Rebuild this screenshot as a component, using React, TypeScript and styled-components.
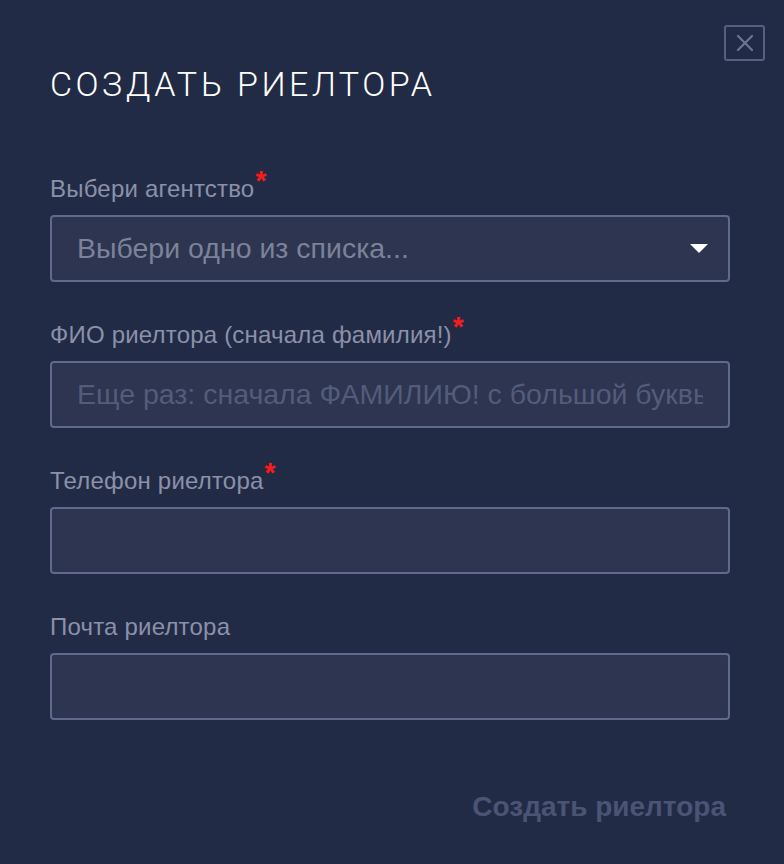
import styled, { createGlobalStyle } from "styled-components";

const GlobalStyle = createGlobalStyle`
  html, body {
    margin: 0;
    padding: 0;
    background: #222b45;
  }
  body {
    font-family: "Liberation Sans", Arial, sans-serif;
  }
`;

const Modal = styled.div`
  position: relative;
  box-sizing: border-box;
  width: 784px;
  min-height: 864px;
  padding: 64px 54px 0 50px;
  background: #222b45;
`;

const CloseButton = styled.button`
  position: absolute;
  top: 25px;
  right: 19px;
  width: 41px;
  height: 36px;
  box-sizing: border-box;
  border: 2px solid #566082;
  border-radius: 3px;
  background: transparent;
  display: flex;
  align-items: center;
  justify-content: center;
  padding: 0;
  cursor: pointer;
`;

const Title = styled.h1`
  margin: 0 0 71px;
  font-family: "Roboto", "Liberation Sans", sans-serif;
  font-weight: 300;
  font-size: 34px;
  line-height: 40px;
  letter-spacing: 3.5px;
  color: #ffffff;
`;

const Form = styled.form`
  display: flex;
  flex-direction: column;
  gap: 39px;
`;

const Field = styled.div`
  display: flex;
  flex-direction: column;
  gap: 12px;
`;

const Label = styled.label`
  font-size: 24px;
  line-height: 28px;
  letter-spacing: 0.2px;
  color: #8b91a9;
`;

const Star = styled.sup`
  color: #ff1a1a;
  font-weight: 700;
  font-size: 28px;
  line-height: 0;
  position: relative;
  top: 2px;
  margin-left: 1px;
`;

const Input = styled.input<{ $dim?: boolean }>`
  box-sizing: border-box;
  width: 100%;
  height: 67px;
  padding: 0 25px;
  background: #2d3550;
  border: 2px solid #5f6a8d;
  border-radius: 4px;
  font-family: "Liberation Sans", Arial, sans-serif;
  font-size: 28.5px;
  color: #c8cbd6;
  outline: none;

  &::placeholder {
    color: ${(p) => (p.$dim ? "#535c7a" : "#7b8299")};
  }
`;

const SelectBox = styled.div`
  box-sizing: border-box;
  height: 67px;
  padding: 0 20px 0 25px;
  background: #2d3550;
  border: 2px solid #5f6a8d;
  border-radius: 4px;
  display: flex;
  align-items: center;
  justify-content: space-between;
  font-size: 28.5px;
  color: #7b8299;
  cursor: pointer;
`;

const Footer = styled.div`
  display: flex;
  justify-content: flex-end;
  margin-top: 71px;
  padding-right: 4px;
`;

const SubmitButton = styled.button`
  background: none;
  border: none;
  padding: 0;
  font-family: "Liberation Sans", Arial, sans-serif;
  font-weight: 700;
  font-size: 28px;
  line-height: 32px;
  color: #4b5474;
  cursor: default;
`;

export default function App() {
  return (
    <>
      <GlobalStyle />
      <Modal>
        <CloseButton type="button" aria-label="Закрыть">
          <svg width="18" height="18" viewBox="0 0 18 18">
            <path
              d="M2 2L16 16M16 2L2 16"
              stroke="#6c7596"
              strokeWidth="2.2"
              strokeLinecap="round"
            />
          </svg>
        </CloseButton>
        <Title>СОЗДАТЬ РИЕЛТОРА</Title>
        <Form onSubmit={(e) => e.preventDefault()}>
          <Field>
            <Label>
              Выбери агентство<Star>*</Star>
            </Label>
            <SelectBox>
              <span>Выбери одно из списка...</span>
              <svg width="18" height="9" viewBox="0 0 18 9">
                <path d="M0 0H18L9 9Z" fill="#ffffff" />
              </svg>
            </SelectBox>
          </Field>
          <Field>
            <Label htmlFor="fio">
              ФИО риелтора (сначала фамилия!)<Star>*</Star>
            </Label>
            <Input
              id="fio"
              $dim
              placeholder="Еще раз: сначала ФАМИЛИЮ! с большой буквы"
            />
          </Field>
          <Field>
            <Label htmlFor="phone">
              Телефон риелтора<Star>*</Star>
            </Label>
            <Input id="phone" />
          </Field>
          <Field>
            <Label htmlFor="email">Почта риелтора</Label>
            <Input id="email" />
          </Field>
        </Form>
        <Footer>
          <SubmitButton type="button">Создать риелтора</SubmitButton>
        </Footer>
      </Modal>
    </>
  );
}
